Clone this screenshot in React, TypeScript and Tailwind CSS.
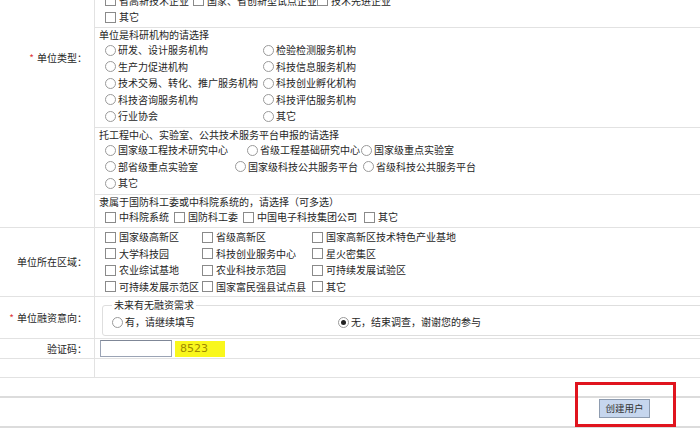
import React from 'react';

const Box: React.FC = () => (
  <span className="inline-block w-[11px] h-[11px] border border-[#8a8a8a] bg-white mr-[3px] shrink-0" />
);

const Radio: React.FC<{ checked?: boolean }> = ({ checked }) => (
  <span className="inline-flex items-center justify-center w-[11px] h-[11px] rounded-full border border-[#9a9a9a] bg-white mr-[2px] shrink-0">
    {checked && <span className="w-[5px] h-[5px] rounded-full bg-[#222]" />}
  </span>
);

type Opt = { text: string; w?: number };

const OptRow: React.FC<{ items: Opt[]; radio?: boolean }> = ({ items, radio }) => (
  <div className="flex items-center h-[16.5px] pl-[10px]">
    {items.map((o, i) => (
      <span key={i} className="flex items-center whitespace-nowrap" style={o.w ? { width: o.w } : undefined}>
        {radio ? <Radio /> : <Box />}
        {o.text}
      </span>
    ))}
  </div>
);

const Label: React.FC<{ text: string; req?: boolean; className?: string }> = ({ text, req, className }) => (
  <div className={`w-[95px] shrink-0 border-r border-[#e2e2e2] text-right pr-[7px] ${className ?? ''}`}>
    {req && <span className="text-[#e03a3a] mr-[3px]">*</span>}
    {text}
  </div>
);

const Title: React.FC<{ text: string }> = ({ text }) => (
  <div className="h-[14px] leading-[14px] pl-[4px]">{text}</div>
);

export default function App() {
  return (
    <div className="relative w-[700px] h-[431px] overflow-hidden bg-white text-[10px] text-[#262626] font-['Noto_Sans_CJK_SC','Noto_Sans',sans-serif] leading-[14px]">
      <div className="-mt-[38px]">
        {/* 单位类型 */}
        <div className="flex border-b border-[#e2e2e2]">
          <Label text="单位类型：" req className="pt-[89px]" />
          <div className="flex-1">
            <div className="border-b border-[#e2e2e2] pb-[1.5px]">
              <Title text="单位是企业的请选择" />
              <OptRow items={[{ text: '高新技术企业', w: 88 }, { text: '科技型中小企业', w: 124 }, { text: '民营科技企业' }]} />
              <OptRow items={[{ text: '省高新技术企业', w: 88 }, { text: '国家、省创新型试点企业', w: 124 }, { text: '技术先进企业' }]} />
              <OptRow items={[{ text: '其它' }]} />
            </div>
            <div className="border-b border-[#e2e2e2] pb-[2.5px]">
              <Title text="单位是科研机构的请选择" />
              <OptRow radio items={[{ text: '研发、设计服务机构', w: 158 }, { text: '检验检测服务机构' }]} />
              <OptRow radio items={[{ text: '生产力促进机构', w: 158 }, { text: '科技信息服务机构' }]} />
              <OptRow radio items={[{ text: '技术交易、转化、推广服务机构', w: 158 }, { text: '科技创业孵化机构' }]} />
              <OptRow radio items={[{ text: '科技咨询服务机构', w: 158 }, { text: '科技评估服务机构' }]} />
              <OptRow radio items={[{ text: '行业协会', w: 158 }, { text: '其它' }]} />
            </div>
            <div className="border-b border-[#e2e2e2] pb-[2.5px]">
              <Title text="托工程中心、实验室、公共技术服务平台申报的请选择" />
              <OptRow radio items={[{ text: '国家级工程技术研究中心', w: 142 }, { text: '省级工程基础研究中心', w: 114 }, { text: '国家级重点实验室' }]} />
              <OptRow radio items={[{ text: '部省级重点实验室', w: 130 }, { text: '国家级科技公共服务平台', w: 128 }, { text: '省级科技公共服务平台' }]} />
              <OptRow radio items={[{ text: '其它' }]} />
            </div>
            <div className="pb-[1.5px]">
              <Title text="隶属于国防科工委或中科院系统的，请选择（可多选）" />
              <OptRow items={[{ text: '中科院系统', w: 69 }, { text: '国防科工委', w: 69 }, { text: '中国电子科技集团公司', w: 121 }, { text: '其它' }]} />
            </div>
          </div>
        </div>

        {/* 单位所在区域 */}
        <div className="flex border-b border-[#e2e2e2]">
          <Label text="单位所在区域：" className="flex items-center justify-end" />
          <div className="flex-1 py-[1px]">
            <OptRow items={[{ text: '国家级高新区', w: 97 }, { text: '省级高新区', w: 110 }, { text: '国家高新区技术特色产业基地' }]} />
            <OptRow items={[{ text: '大学科技园', w: 97 }, { text: '科技创业服务中心', w: 110 }, { text: '星火密集区' }]} />
            <OptRow items={[{ text: '农业综试基地', w: 97 }, { text: '农业科技示范园', w: 110 }, { text: '可持续发展试验区' }]} />
            <OptRow items={[{ text: '可持续发展示范区', w: 97 }, { text: '国家富民强县试点县', w: 110 }, { text: '其它' }]} />
          </div>
        </div>

        {/* 单位融资意向 */}
        <div className="flex h-[42px] border-b border-[#e2e2e2]">
          <Label text="单位融资意向：" req className="flex items-center justify-end" />
          <div className="flex-1 pl-[7px] pt-[1px]">
            <fieldset className="h-[38px] border border-[#dedede] rounded-[3px] px-[9px] -mr-[4px]">
              <legend className="px-[2px] leading-[14px]">未来有无融资需求</legend>
              <div className="flex items-center h-[20px]">
                <span className="flex items-center w-[226px]">
                  <Radio />有，请继续填写
                </span>
                <span className="flex items-center">
                  <Radio checked />无，结束调查，谢谢您的参与
                </span>
              </div>
            </fieldset>
          </div>
        </div>

        {/* 验证码 */}
        <div className="flex h-[20px] border-b border-[#e2e2e2]">
          <Label text="验证码：" className="flex items-center justify-end" />
          <div className="flex-1 flex items-center gap-[3px] pl-[5px]">
            <input className="w-[72px] h-[17px] border border-[#9aa3b4] border-t-[#7f8797] bg-white outline-none" />
            <span className="w-[50px] h-[16px] bg-[#f9f71c] text-[#a08a00] pl-[5px] leading-[16px] font-['DejaVu_Sans',sans-serif] text-[11px]">
              8523
            </span>
          </div>
        </div>

        {/* empty row */}
        <div className="flex h-[19px] border-b border-[#e2e2e2]">
          <Label text="" />
          <div className="flex-1" />
        </div>

        <div className="h-[20px] border-b-2 border-[#dcdcdc]" />

        <div className="h-[30px] border-b-2 border-[#dcdcdc] flex justify-end pr-[50px]">
          <button className="mt-[1px] w-[51px] h-[19px] bg-[#c6d6ee] border border-[#8e9cb0] text-[9.5px] text-[#333] leading-[17px]">
            创建用户
          </button>
        </div>
      </div>

      {/* annotation */}
      <div className="absolute left-[575px] top-[382px] w-[101px] h-[45px] border-[3px] border-[#e0141e]" />
    </div>
  );
}
